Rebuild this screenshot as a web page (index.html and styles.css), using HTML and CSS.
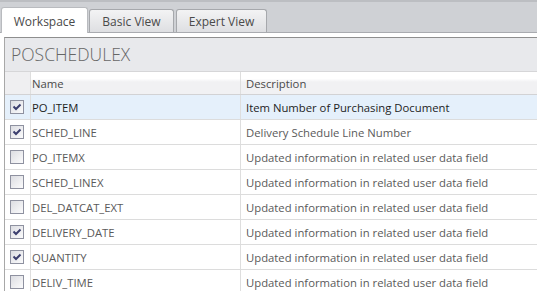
FILE: index.html
```html
<!DOCTYPE html>
<html lang="en">
<head>
    <meta charset="UTF-8">
    <meta name="viewport" content="width=device-width, initial-scale=1.0">
    <title>POSCHEDULEX</title>
    <link rel="stylesheet" href="styles.css">
</head>
<body>
    <div class="tab-bar">
        <div class="tab active">Workspace</div>
        <div class="tab tab-basic">Basic View</div>
        <div class="tab tab-expert">Expert View</div>
    </div>

    <div class="content">
        <div class="panel">
            <div class="panel-title">POSCHEDULEX</div>

            <div class="grid-row grid-head">
                <div class="cell cell-check"></div>
                <div class="cell cell-name">Name</div>
                <div class="cell cell-desc">Description</div>
            </div>

            <div class="grid-row selected">
                <div class="cell cell-check"><span class="checkbox"><svg viewBox="0 0 12 12"><polyline points="2.5,5.5 5,8 9.5,3.5"/></svg></span></div>
                <div class="cell cell-name">PO_ITEM</div>
                <div class="cell cell-desc">Item Number of Purchasing Document</div>
            </div>
            <div class="grid-row">
                <div class="cell cell-check"><span class="checkbox"><svg viewBox="0 0 12 12"><polyline points="2.5,5.5 5,8 9.5,3.5"/></svg></span></div>
                <div class="cell cell-name">SCHED_LINE</div>
                <div class="cell cell-desc">Delivery Schedule Line Number</div>
            </div>
            <div class="grid-row">
                <div class="cell cell-check"><span class="checkbox"></span></div>
                <div class="cell cell-name">PO_ITEMX</div>
                <div class="cell cell-desc">Updated information in related user data field</div>
            </div>
            <div class="grid-row">
                <div class="cell cell-check"><span class="checkbox"></span></div>
                <div class="cell cell-name">SCHED_LINEX</div>
                <div class="cell cell-desc">Updated information in related user data field</div>
            </div>
            <div class="grid-row">
                <div class="cell cell-check"><span class="checkbox"></span></div>
                <div class="cell cell-name">DEL_DATCAT_EXT</div>
                <div class="cell cell-desc">Updated information in related user data field</div>
            </div>
            <div class="grid-row">
                <div class="cell cell-check"><span class="checkbox"><svg viewBox="0 0 12 12"><polyline points="2.5,5.5 5,8 9.5,3.5"/></svg></span></div>
                <div class="cell cell-name">DELIVERY_DATE</div>
                <div class="cell cell-desc">Updated information in related user data field</div>
            </div>
            <div class="grid-row">
                <div class="cell cell-check"><span class="checkbox"><svg viewBox="0 0 12 12"><polyline points="2.5,5.5 5,8 9.5,3.5"/></svg></span></div>
                <div class="cell cell-name">QUANTITY</div>
                <div class="cell cell-desc">Updated information in related user data field</div>
            </div>
            <div class="grid-row">
                <div class="cell cell-check"><span class="checkbox"></span></div>
                <div class="cell cell-name">DELIV_TIME</div>
                <div class="cell cell-desc">Updated information in related user data field</div>
            </div>
        </div>
    </div>
</body>
</html>
```

FILE: styles.css
```css
body {
    margin: 0;
    background-color: #fff;
    font-family: "Open Sans", "Noto Sans", sans-serif;
    font-size: 11.3px;
    color: #5a5a5a;
    overflow: hidden;
}
.tab-bar {
    display: flex;
    align-items: flex-end;
    gap: 1px;
    height: 30px;
    padding-left: 1px;
    background-color: #cfd1d5;
    border-top: 2px solid #bcbec2;
    border-bottom: 1px solid #a9abb0;
}
.tab {
    box-sizing: border-box;
    height: 23px;
    padding-top: 3px;
    text-align: center;
    color: #4a4a4a;
    font-size: 12px;
    border: 1px solid #a6a8ac;
    border-bottom: none;
    border-radius: 3px 3px 0 0;
    background: linear-gradient(#f3f3f4, #dedfe2);
}
.tab.active {
    width: 87px;
    height: 26px;
    margin-bottom: -1px;
    padding-top: 5px;
    background: #fff;
    border-color: #b9bbbf;
}
.tab-basic {
    width: 85px;
}
.tab-expert {
    width: 91px;
    margin-left: 1px;
}
.content {
    padding: 4px 0 0 4px;
}
.panel {
    border-top: 1px solid #8e8e8e;
    border-left: 1px solid #a8a8a8;
}
.panel-title {
    height: 33px;
    line-height: 33px;
    padding-left: 6px;
    font-size: 17.5px;
    font-weight: 300;
    color: #666;
    background-color: #e8e9ec;
    border-bottom: 1px solid #d6d6d8;
}
.grid-row {
    display: grid;
    grid-template-columns: 26px 210px 1fr;
    height: 24px;
    border-bottom: 1px solid #dcdcdc;
}
.grid-head {
    height: 22px;
    color: #4a4a4a;
    background: linear-gradient(#fff 30%, #f1f1f3 45%, #f1f1f3);
    border-bottom-color: #d2d2d4;
}
.cell {
    display: flex;
    align-items: center;
    border-right: 1px solid #dedede;
    white-space: nowrap;
}
.cell-name {
    padding-left: 1px;
}
.cell-desc {
    padding-left: 5px;
    border-right: none;
}
.grid-head .cell-check {
    background-color: #efeff1;
}
.selected {
    background-color: #e5f0fb;
    color: #1e1e1e;
}
.checkbox {
    box-sizing: border-box;
    display: flex;
    width: 14px;
    height: 14px;
    margin-left: 5px;
    border: 1px solid #8e91a0;
    background: linear-gradient(135deg, #dcdde2, #fbfbfc);
}
.checkbox svg {
    width: 12px;
    height: 12px;
    fill: none;
    stroke: #3b3e6e;
    stroke-width: 2;
}
```
